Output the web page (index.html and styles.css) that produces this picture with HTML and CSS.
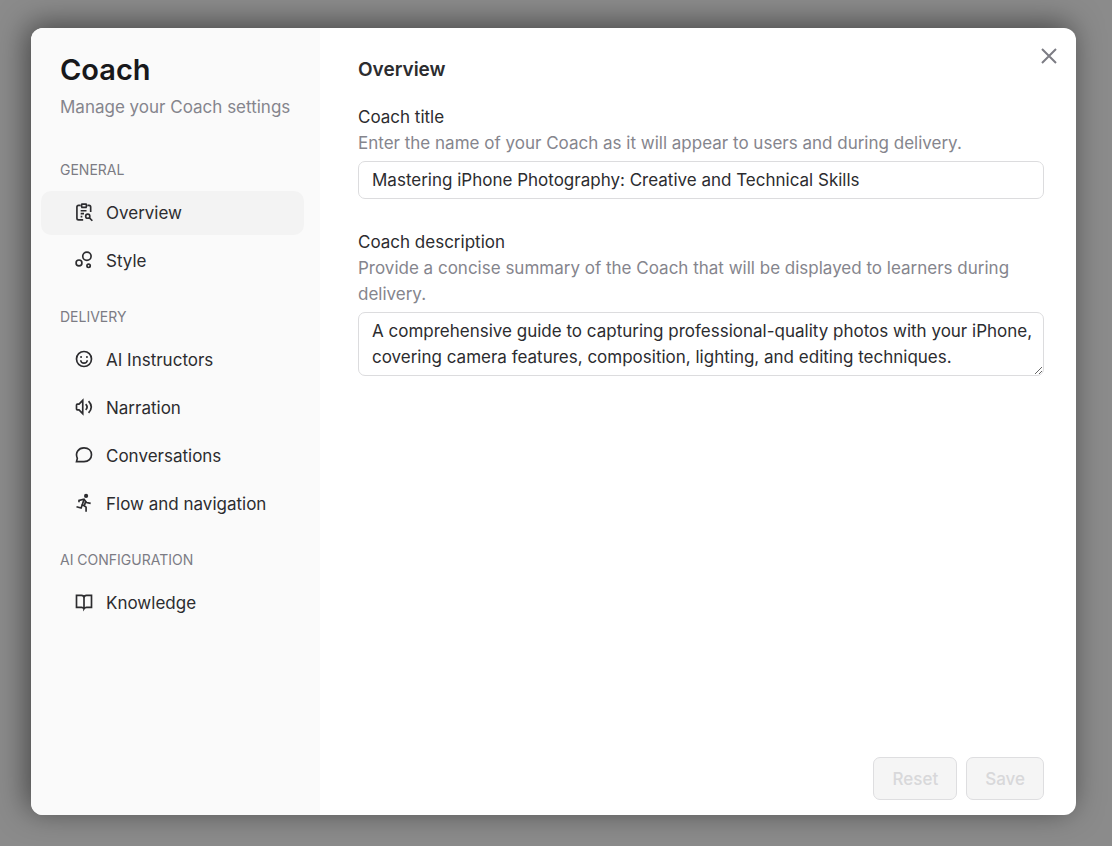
FILE: index.html
```html
<!DOCTYPE html>
<html lang="en">
<head>
  <meta charset="UTF-8" />
  <meta name="viewport" content="width=device-width, initial-scale=1.0"/>
  <title>Coach | Settings</title>
  <link rel="stylesheet" href="styles.css">
</head>
<body>

  <div class="overlay">
    <div class="modal" role="dialog" aria-labelledby="modalTitle">

      <!-- Sidebar -->
      <aside class="sidebar">
        <h1 id="modalTitle">Coach</h1>
        <p class="subtitle">Manage your Coach settings</p>

        <nav>
          <h3>GENERAL</h3>
          <div class="nav-group">
            <a href="#overview" class="nav-item active">
              <svg class="icon" viewBox="0 0 24 24">
                <path d="M11 21.500H5.500Q3.500 21.500 3.500 19.500V6Q3.500 4 5.500 4H8M16 4H18Q20 4 20 6V12"/>
                <path d="M9.500 2.500H14.500Q15.500 4.500 14.500 6.500H9.500Q8.500 4.500 9.500 2.500Z"/>
                <path d="M8 10.500H15M8 14H12M8 17.500H10"/>
                <circle cx="16.500" cy="17" r="2.500"/>
                <path d="M18.500 19L22 22.500"/>
              </svg>
              Overview
            </a>
            <a href="#style" class="nav-item">
              <svg class="icon" viewBox="0 0 24 24">
                <circle cx="15.500" cy="7.500" r="5"/>
                <circle cx="6" cy="15.500" r="3.500"/>
                <circle cx="17.500" cy="19" r="2"/>
              </svg>
              Style
            </a>
          </div>

          <h3>DELIVERY</h3>
          <div class="nav-group">
            <a href="#instructors" class="nav-item">
              <svg class="icon" viewBox="0 0 24 24">
                <circle cx="12" cy="12" r="9"/>
                <path d="M8 13.500Q8.500 17 12 17T16 13.500"/>
                <circle class="dot" cx="8.500" cy="9.500" r="1.200"/>
                <circle class="dot" cx="15.500" cy="9.500" r="1.200"/>
              </svg>
              AI Instructors
            </a>
            <a href="#narration" class="nav-item">
              <svg class="icon" viewBox="0 0 24 24">
                <path d="M6 8.500L10.500 4V20L6 15.500H4Q3 15.500 3 14.500V9.500Q3 8.500 4 8.500Z"/>
                <path d="M14 8.500Q17.500 12 14 15.500M17.500 5Q24 12 17.500 19"/>
              </svg>
              Narration
            </a>
            <a href="#conversations" class="nav-item">
              <svg class="icon" viewBox="0 0 24 24">
                <path d="M3 20L4 16C1 9 5.500 3.500 12 3.500C17.500 3.500 21 7 21 11.700S17.500 20 12 20Z"/>
              </svg>
              Conversations
            </a>
            <a href="#flow" class="nav-item">
              <svg class="icon" viewBox="0 0 24 24">
                <circle class="dot" cx="14.500" cy="3.500" r="2.500"/>
                <path d="M6 11V9L12 7.500L15 11.500L20 12.500"/>
                <path d="M12 7.500L10 14L14.500 17V22.500"/>
                <path d="M14 10L12.500 15"/>
                <path d="M3 16.500L8.500 18L10 14"/>
              </svg>
              Flow and navigation
            </a>
          </div>

          <h3>AI CONFIGURATION</h3>
          <div class="nav-group">
            <a href="#knowledge" class="nav-item">
              <svg class="icon" viewBox="0 0 24 24">
                <path d="M12 20Q11 18.500 9 18.500H3V4H9Q12 4 12 7Q12 4 15 4H21V18.500H15Q13 18.500 12 20V6"/>
              </svg>
              Knowledge
            </a>
          </div>
        </nav>
      </aside>

      <!-- Overview form -->
      <form class="content" id="overview">
        <button type="button" class="close-btn" aria-label="Close">
          <svg viewBox="0 0 16 16"><path d="M1 1L15 15M15 1L1 15"/></svg>
        </button>

        <h2>Overview</h2>

        <div class="field">
          <label for="coachTitle">Coach title</label>
          <p class="hint">Enter the name of your Coach as it will appear to users and during delivery.</p>
          <input type="text" id="coachTitle" value="Mastering iPhone Photography: Creative and Technical Skills">
        </div>

        <div class="field">
          <label for="coachDescription">Coach description</label>
          <p class="hint">Provide a concise summary of the Coach that will be displayed to learners during delivery.</p>
          <textarea id="coachDescription" rows="2">A comprehensive guide to capturing professional-quality photos with your iPhone, covering camera features, composition, lighting, and editing techniques.</textarea>
        </div>

        <div class="actions">
          <button type="reset" disabled>Reset</button>
          <button type="submit" disabled>Save</button>
        </div>
      </form>

    </div>
  </div>

</body>
</html>
```
FILE: styles.css
```css
* {
  box-sizing: border-box;
}

body {
  margin: 0;
  font-family: Inter, sans-serif;
  font-size: 17px;
  line-height: 26px;
  color: #2c2c2f;
}

h1, h2, h3, p {
  margin: 0;
}

.overlay {
  display: flex;
  min-height: 100vh;
  padding: 28px 36px 31px 31px;
  background: #8b8b8b;
}

.modal {
  display: flex;
  flex: 1;
  overflow: hidden;
  background: #fff;
  border-radius: 12px;
  box-shadow: -4px -4px 30px rgba(0, 0, 0, 0.5);
}

/* Sidebar */
.sidebar {
  width: 289px;
  flex-shrink: 0;
  padding: 24px 16px 24px 10px;
  background: #fafafa;
}

h1 {
  padding-left: 19px;
  font-size: 29px;
  line-height: 36px;
  font-weight: 600;
  color: #18181b;
}

.subtitle {
  padding-left: 19px;
  margin-top: 6px;
  color: #85858d;
}

h3 {
  padding-left: 19px;
  margin: 37px 0 8px;
  font-size: 14px;
  line-height: 26px;
  font-weight: 400;
  color: #7c7c84;
}

.nav-group + h3 {
  margin-top: 21px;
}

.nav-group {
  display: flex;
  flex-direction: column;
  gap: 4px;
}

.nav-item {
  display: flex;
  align-items: center;
  gap: 12px;
  height: 44px;
  padding: 0 33px;
  border-radius: 10px;
  color: #2c2c2f;
  text-decoration: none;
  white-space: nowrap;
}

.nav-item.active,
.nav-item:hover {
  background: #f3f3f3;
}

.icon {
  width: 20px;
  height: 20px;
  margin-bottom: 3px;
  flex-shrink: 0;
  fill: none;
  stroke: #2c2c2f;
  stroke-width: 2;
}

.icon .dot {
  fill: #2c2c2f;
  stroke: none;
}

/* Form */
.content {
  position: relative;
  display: flex;
  flex: 1;
  flex-direction: column;
  min-width: 0;
  padding: 29px 32px 15px 38px;
}

h2 {
  margin-bottom: 21px;
  font-size: 19px;
  line-height: 26px;
  font-weight: 600;
}

.field {
  display: flex;
  flex-direction: column;
  margin-bottom: 30px;
}

.hint {
  margin-bottom: 5px;
  color: #85858d;
}

input,
textarea {
  width: 100%;
  padding: 5px 13px;
  border: 1px solid #dcdcde;
  border-radius: 7px;
  background: #fff;
  color: #2c2c2f;
  font: inherit;
}

textarea {
  padding-right: 4px;
  resize: vertical;
  overflow: hidden;
}

.close-btn {
  position: absolute;
  top: 16px;
  right: 15px;
  display: flex;
  padding: 4px;
  border: none;
  background: none;
  cursor: pointer;
}

.close-btn svg {
  width: 16px;
  height: 16px;
  fill: none;
  stroke: #7c7c84;
  stroke-width: 2;
}

.actions {
  display: flex;
  justify-content: flex-end;
  gap: 9px;
  margin-top: auto;
}

.actions button {
  height: 43px;
  padding: 0 18px;
  border: 1px solid #dedee0;
  border-radius: 7px;
  background: #f5f5f5;
  color: #d8d8da;
  font: inherit;
  font-weight: 500;
}
```
